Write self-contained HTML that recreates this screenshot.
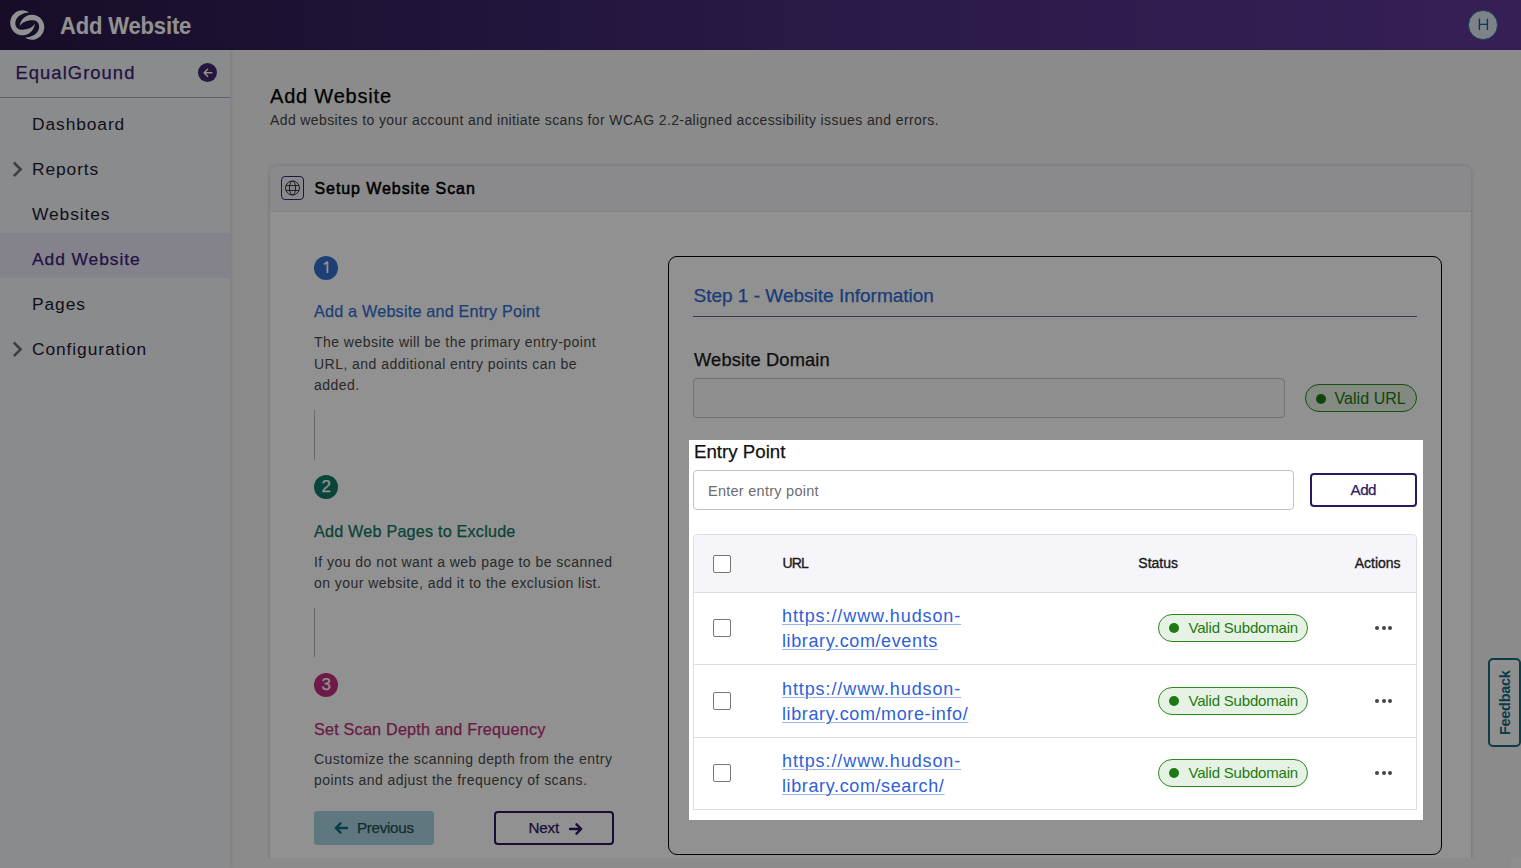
<!DOCTYPE html>
<html><head><meta charset="utf-8">
<style>
*{box-sizing:border-box;margin:0;padding:0}
html,body{width:1521px;height:868px;overflow:hidden;font-family:"Liberation Sans",sans-serif;background:#f4f4f6;color:#111}
.abs{position:absolute;white-space:nowrap}
.t{position:absolute;white-space:nowrap;line-height:1}
.med{-webkit-text-stroke:0.25px currentColor}
#hdr{position:absolute;left:0;top:0;width:1521px;height:50px;background:linear-gradient(90deg,#2a1846 0%,#3a2466 30%,#4c3082 60%,#603898 100%)}
#avatar{position:absolute;left:1468px;top:10px;width:29.5px;height:29.5px;border-radius:50%;background:#dfe7f1;border:1.5px solid #17748c}
#side{position:absolute;left:0;top:50px;width:230px;height:818px;background:#f3f4f8;box-shadow:1px 0 4px rgba(0,0,0,.12)}
.nav{position:absolute;left:32px;font-size:17.4px;color:#221a30;line-height:1;white-space:nowrap;letter-spacing:0.9px}
.nav.act{color:#3d2277}
.navbg{position:absolute;left:0;top:233px;width:230px;height:45px;background:#e9e7f4}
#card{position:absolute;left:40px;top:116px;width:1201px;height:720px;background:#fff;border-radius:8px;box-shadow:0 0 4px rgba(0,0,0,.2)}
#card .chd{position:absolute;left:0;top:0;width:1201px;height:46px;background:#f3f3f7;border-bottom:1px solid #e3e3e6;border-radius:8px 8px 0 0}
.stepc{position:absolute;left:314px;width:24px;height:24px;border-radius:50%}
.stepc svg{position:absolute;left:0;top:0}
.stitle{position:absolute;left:314px;font-size:16.2px;line-height:1;white-space:nowrap;letter-spacing:0.2px}
.sdesc{position:absolute;left:314px;font-size:14px;line-height:21.2px;color:#4a4a4a;white-space:nowrap;letter-spacing:0.46px}
.vline{position:absolute;left:314px;width:1px;background:#b9b6c8}
#panel{position:absolute;left:668px;top:256px;width:774px;height:599px;border:1.5px solid #000;border-radius:9px;background:#fff}
.badge{position:absolute;border:1px solid #2a8a1e;background:#e6f2e4;border-radius:15px;color:#1c7a12;white-space:nowrap}
.badge .dot{position:absolute;width:10px;height:10px;border-radius:50%;background:#1d7a12}
.cb{position:absolute;left:713px;width:18px;height:18px;border:1.5px solid #767676;border-radius:2px;background:#fff}
.link{position:absolute;left:782px;font-size:18px;line-height:25px;color:#2f5fd6;text-decoration:underline;text-decoration-color:#9ab8ec;text-decoration-thickness:1px;text-underline-offset:2px;white-space:nowrap;letter-spacing:0.9px}
.dots{position:absolute;left:1375px;width:17px;height:4px}
.dots i{position:absolute;top:0;width:4px;height:4px;border-radius:50%;background:#444}
.rowline{position:absolute;left:693px;width:724px;height:1px;background:#dedede}
.th{position:absolute;top:556.1px;font-size:14px;color:#1a1a1a;line-height:1;white-space:nowrap;-webkit-text-stroke:0.35px currentColor}
#overlay{position:absolute;left:689px;top:440px;width:734px;height:380px;box-shadow:0 0 0 3000px rgba(0,0,0,.43);pointer-events:none}
</style></head><body>
<div id="hdr">
  <svg class="abs" style="left:0;top:0" width="50" height="50" viewBox="0 0 50 50">
    <path fill="#fff" d="M29.2 12.3A12.3 12.5 0 1 0 34.8 23.5C33 27.5 27.5 30 21 29.7C16.5 29.3 14.8 25.5 15.5 21.5C16.7 16.5 22 13 29.2 12.3Z"/>
    <path fill="#fff" d="M25.3 37.7A12.3 12.5 0 1 0 19.7 26.5C21.5 22.5 27 20 33.5 20.3C38 20.7 39.7 24.5 39 28.5C37.8 33.5 32.5 37 25.3 37.7Z"/>
  </svg>
  <div class="t" style="left:60px;top:14px;font-size:24.5px;font-weight:bold;color:#fff;letter-spacing:-0.2px;transform:scaleX(0.9);transform-origin:0 0">Add Website</div>
  <div id="avatar"><svg width="30" height="30" viewBox="0 0 30 30" style="position:absolute;left:-1.5px;top:-1.5px"><path d="M11.4 8.8V19.9M19.4 8.8V19.9M11.4 14.3H19.4" fill="none" stroke="#0c6688" stroke-width="1.35"/></svg></div>
</div>
<div id="side">
  <div class="t med" style="left:15.5px;top:14.1px;font-size:18.4px;color:#3d2277;letter-spacing:1.05px">EqualGround</div>
  <div class="abs" style="left:197.5px;top:12.5px;width:19.5px;height:19.5px;border-radius:50%;background:#432770">
    <svg width="20" height="20" viewBox="0 0 20 20" style="position:absolute;left:0;top:0"><path d="M13.8 9.8H6.2M9.6 6.3L6.1 9.8L9.6 13.3" fill="none" stroke="#fff" stroke-width="1.5" stroke-linecap="round" stroke-linejoin="round"/></svg>
  </div>
  <div class="abs" style="left:0;top:47px;width:230px;height:1.2px;background:#aaa5c2"></div>
</div>
<div class="navbg"></div>
<div class="nav" style="top:116px">Dashboard</div>
<svg class="abs" style="left:10px;top:159.6px" width="14" height="18" viewBox="0 0 14 18"><path d="M3.8 2.5L10.6 9.3L3.8 16.1" fill="none" stroke="#6e6e6e" stroke-width="2.6"/></svg>
<div class="nav" style="top:160.8px">Reports</div>
<div class="nav" style="top:205.9px">Websites</div>
<div class="nav act med" style="top:250.9px;letter-spacing:0.95px">Add Website</div>
<div class="nav" style="top:296px">Pages</div>
<svg class="abs" style="left:10px;top:339.6px" width="14" height="18" viewBox="0 0 14 18"><path d="M3.8 2.5L10.6 9.3L3.8 16.1" fill="none" stroke="#6e6e6e" stroke-width="2.6"/></svg>
<div class="nav" style="top:340.6px">Configuration</div>

<div class="t med" style="left:270px;top:85.8px;font-size:20px;color:#000;letter-spacing:0.8px">Add Website</div>
<div class="t" style="left:270px;top:112.6px;font-size:14px;color:#444;letter-spacing:0.39px">Add websites to your account and initiate scans for WCAG 2.2-aligned accessibility issues and errors.</div>

<div class="abs" style="left:230px;top:50px;width:1291px;height:808px;overflow:hidden"><div id="card"><div class="chd"></div></div></div>
<div class="abs" style="left:1511px;top:858px;width:10px;height:10px;background:#fafafa"></div>
<div class="abs" style="left:281px;top:176px;width:23px;height:23.5px;border:1px solid #3d2277;border-radius:4px">
  <svg width="21" height="21.5" viewBox="0 0 21 21.5" style="position:absolute;left:0;top:0"><g fill="none" stroke="#2a2140" stroke-width="0.95"><circle cx="10.5" cy="11" r="7"/><ellipse cx="10.5" cy="11" rx="3" ry="7"/><path d="M4.2 8.6H16.8M4.2 13.4H16.8"/></g></svg>
</div>
<div class="t" style="left:314.5px;top:180.5px;font-size:16px;color:#000;letter-spacing:0.92px;-webkit-text-stroke:0.55px #000">Setup Website Scan</div>

<div class="stepc" style="top:256px;background:#3670cf"><svg width="24" height="24" viewBox="0 0 24 24"><path d="M10 8.6L13.4 6.1V16.9" fill="none" stroke="#fff" stroke-width="1.8" stroke-linecap="butt" stroke-linejoin="round"/></svg></div>
<div class="stitle med" style="top:303.3px;color:#3670cf">Add a Website and Entry Point</div>
<div class="sdesc" style="top:332.4px">The website will be the primary entry-point<br>URL, and additional entry points can be<br>added.</div>
<div class="vline" style="top:410px;height:50px"></div>
<div class="stepc" style="top:475px;background:#137a68"><span class="t med" style="left:7.4px;top:2.6px;font-size:17px;color:#fff">2</span></div>
<div class="stitle med" style="top:522.5px;color:#127563">Add Web Pages to Exclude</div>
<div class="sdesc" style="top:551.5px">If you do not want a web page to be scanned<br>on your website, add it to the exclusion list.</div>
<div class="vline" style="top:608px;height:49px"></div>
<div class="stepc" style="top:673px;background:#c02e7c"><span class="t med" style="left:7.4px;top:2.6px;font-size:17px;color:#fff">3</span></div>
<div class="stitle med" style="top:720.5px;color:#bb3078">Set Scan Depth and Frequency</div>
<div class="sdesc" style="top:749.2px">Customize the scanning depth from the entry<br>points and adjust the frequency of scans.</div>

<div class="abs" style="left:314px;top:811px;width:120px;height:34px;border-radius:3px;background:#a8d4e2">
  <svg width="16" height="16" viewBox="0 0 16 16" style="position:absolute;left:19px;top:9px"><path d="M14 8H3M7.5 3.3L2.8 8L7.5 12.7" fill="none" stroke="#0e6a80" stroke-width="2.4" stroke-linecap="round" stroke-linejoin="round"/></svg>
  <span class="t med" style="left:43px;top:8.9px;color:#2a4a55;font-size:15.2px;letter-spacing:-0.3px">Previous</span>
</div>
<div class="abs" style="left:494px;top:811px;width:120px;height:34px;border-radius:4px;border:2px solid #2e1a62;color:#2e1a62">
  <span class="t med" style="left:32.5px;top:7px;font-size:15.2px;letter-spacing:-0.2px">Next</span>
  <svg width="16" height="16" viewBox="0 0 16 16" style="position:absolute;left:72px;top:8px"><path d="M2 8H13M8.5 3.3L13.2 8L8.5 12.7" fill="none" stroke="#2e1a62" stroke-width="2.4" stroke-linecap="round" stroke-linejoin="round"/></svg>
</div>

<div id="panel"></div>
<div class="t med" style="left:693.5px;top:285.6px;font-size:19px;color:#2f6ad8;letter-spacing:0px">Step 1 - Website Information</div>
<div class="abs" style="left:693px;top:316px;width:724px;height:1.2px;background:#6e6690"></div>
<div class="t med" style="left:694px;top:351.3px;font-size:18.3px;color:#1a1a1a;letter-spacing:0.15px">Website Domain</div>
<div class="abs" style="left:693px;top:378px;width:592px;height:40px;border:1px solid #c6c6c6;border-radius:4px;background:#fbfbfb"></div>
<div class="badge" style="left:1305px;top:384px;width:112px;height:28px">
  <div class="dot" style="left:10px;top:8.5px"></div>
  <span class="t" style="left:28.5px;top:5.5px;font-size:16px;letter-spacing:0.05px">Valid URL</span>
</div>

<!-- highlighted region -->
<div class="abs" style="left:689px;top:440px;width:734px;height:380px;background:#fff"></div>
<div class="t med" style="left:694px;top:443.3px;font-size:18.7px;color:#111;letter-spacing:0px">Entry Point</div>
<div class="abs" style="left:693px;top:470px;width:601px;height:40px;border:1px solid #c2c2c2;border-radius:4px;background:#fff"></div>
<div class="t" style="left:708px;top:483.8px;font-size:14.5px;color:#6d6d6d;letter-spacing:0.26px">Enter entry point</div>
<div class="abs" style="left:1310px;top:473px;width:107px;height:34px;border:2px solid #2d1860;border-radius:4px"></div>
<div class="t med" style="left:1350.5px;top:482.3px;font-size:15.2px;color:#2d1860;letter-spacing:-0.5px">Add</div>

<div class="abs" style="left:693px;top:534px;width:724px;height:276px;border:1px solid #dedede;border-radius:4px 4px 0 0"></div>
<div class="abs" style="left:694px;top:535px;width:722px;height:57px;background:#f5f5fa;border-radius:3px 3px 0 0"></div>
<div class="rowline" style="top:592px"></div>
<div class="rowline" style="top:664px"></div>
<div class="rowline" style="top:737px"></div>
<div class="cb" style="top:555px"></div>
<div class="th" style="left:782.5px;letter-spacing:-0.8px">URL</div>
<div class="th" style="left:1138.3px">Status</div>
<div class="th" style="left:1354.7px">Actions</div>

<div class="cb" style="top:619px"></div>
<div class="link" style="top:604.2px">https://www.hudson-<br><span style="letter-spacing:0.62px">library.com/events</span></div>
<div class="badge" style="left:1158px;top:614px;width:150px;height:28px"><div class="dot" style="left:9.8px;top:8.3px"></div><span class="t" style="left:29.5px;top:5px;font-size:15px;letter-spacing:-0.19px">Valid Subdomain</span></div>
<div class="dots" style="top:626px"><i style="left:0"></i><i style="left:6.5px"></i><i style="left:13px"></i></div>

<div class="cb" style="top:692px"></div>
<div class="link" style="top:677.2px">https://www.hudson-<br><span style="letter-spacing:0.62px">library.com/more-info/</span></div>
<div class="badge" style="left:1158px;top:687px;width:150px;height:28px"><div class="dot" style="left:9.8px;top:8.3px"></div><span class="t" style="left:29.5px;top:5px;font-size:15px;letter-spacing:-0.19px">Valid Subdomain</span></div>
<div class="dots" style="top:699px"><i style="left:0"></i><i style="left:6.5px"></i><i style="left:13px"></i></div>

<div class="cb" style="top:764px"></div>
<div class="link" style="top:748.9px">https://www.hudson-<br><span style="letter-spacing:0.62px">library.com/search/</span></div>
<div class="badge" style="left:1158px;top:759px;width:150px;height:28px"><div class="dot" style="left:9.8px;top:8.3px"></div><span class="t" style="left:29.5px;top:5px;font-size:15px;letter-spacing:-0.19px">Valid Subdomain</span></div>
<div class="dots" style="top:771px"><i style="left:0"></i><i style="left:6.5px"></i><i style="left:13px"></i></div>

<!-- feedback tab -->
<div class="abs" style="left:1488px;top:657.5px;width:33px;height:89px;border:2px solid #0f6b80;border-radius:5px;background:#fbfbfb">
  <span class="t" style="left:7.5px;top:75.5px;font-size:14.5px;font-weight:bold;color:#0f6b80;letter-spacing:-0.3px;transform:rotate(-90deg);transform-origin:0 0">Feedback</span>
</div>

<div id="overlay"></div>
</body></html>
